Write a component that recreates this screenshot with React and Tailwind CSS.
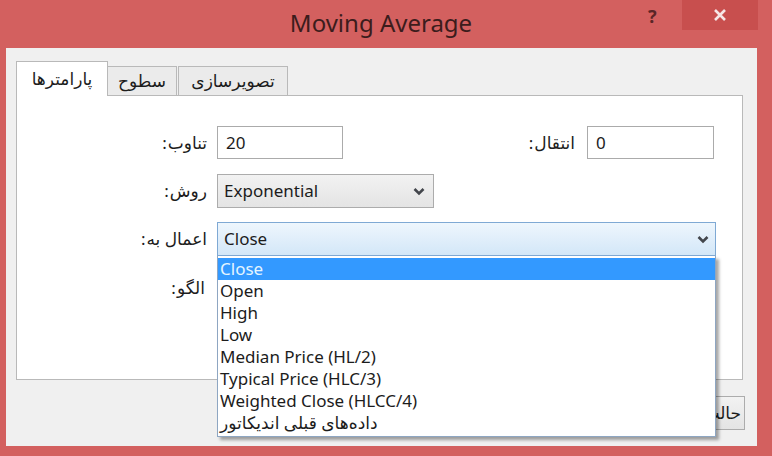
import React from "react";

const OPTIONS = [
  "Close",
  "Open",
  "High",
  "Low",
  "Median Price (HL/2)",
  "Typical Price (HLC/3)",
  "Weighted Close (HLCC/4)",
  "داده‌های قبلی اندیکاتور",
];

function Chevron() {
  return (
    <svg width="12" height="9" viewBox="0 0 12 9" className="shrink-0">
      <path d="M1.5 2 L6 6.5 L10.5 2" fill="none" stroke="#43464c" strokeWidth="2.6" />
    </svg>
  );
}

// colon sits on the left of the persian word, as in the dialog
function Label({ text, className = "" }) {
  return (
    <div className={`flex justify-end items-center text-[17px] text-[#1c1c1c] ${className}`}>
      <span className="mr-[1px]">:</span>
      <span>{text}</span>
    </div>
  );
}

export default function App() {
  return (
    <div className="w-[772px] h-[456px] bg-[#d3605f] flex flex-col overflow-hidden font-['Noto_Sans','DejaVu_Sans',sans-serif]">
      {/* Caption */}
      <div className="h-[48px] flex items-start shrink-0">
        <div className="flex-1 pl-[114px] pt-[5px] text-center text-[24px] text-[#3b1c1c]">
          Moving Average
        </div>
        <div className="w-[14px] pt-[3px] mr-[20px] text-[18px] font-bold text-[#5b2526]">?</div>
        <div className="w-[76px] h-[30px] mr-[14px] bg-[#c84f4e] flex items-center justify-center">
          <svg width="14" height="14" viewBox="0 0 14 14">
            <path d="M2 2 L12 12 M12 2 L2 12" stroke="#f6e6e6" strokeWidth="2.6" />
          </svg>
        </div>
      </div>

      {/* Client area */}
      <div className="ml-[6px] w-[751px] h-[398px] bg-[#f0f0f0] pt-[13px] pl-[10px] pr-[14px] flex flex-col">
        {/* Tabs */}
        <div className="h-[34px] flex items-end">
          <div className="w-[92px] h-[35px] -mb-px z-10 bg-white border border-b-0 border-[#b9b9b9] flex items-start justify-center pt-[4px]">
            <span className="text-[17px] text-[#1c1c1c]">پارامترها</span>
          </div>
          <div className="w-[69px] h-[29px] bg-[#ebebeb] border border-b-0 border-l-0 border-[#b9b9b9] flex items-center justify-center">
            <span className="text-[17px] text-[#1c1c1c]">سطوح</span>
          </div>
          <div className="w-[110px] h-[29px] ml-px bg-[#ebebeb] border border-b-0 border-[#b9b9b9] flex items-center justify-center">
            <span className="text-[17px] text-[#1c1c1c]">تصویرسازی</span>
          </div>
        </div>

        {/* Panel */}
        <div className="w-[727px] h-[285px] bg-white border border-[#b9b9b9] pt-[30px] flex flex-col gap-[15px]">
          <div className="flex items-center h-[33px]">
            <Label text="تناوب" className="w-[190px]" />
            <div className="ml-[10px] w-[126px] h-[33px] border border-[#ababab] bg-white flex items-center pl-[8px] text-[17px] text-[#1c1c1c]">
              20
            </div>
            <Label text="انتقال" className="w-[232px]" />
            <div className="ml-[12px] w-[127px] h-[33px] border border-[#ababab] bg-white flex items-center pl-[8px] text-[17px] text-[#1c1c1c]">
              0
            </div>
          </div>

          <div className="flex items-center h-[34px]">
            <Label text="روش" className="w-[190px]" />
            <div className="ml-[10px] w-[217px] h-[34px] border border-[#acacac] bg-gradient-to-b from-[#f2f2f2] to-[#e4e4e4] flex items-center justify-between pl-[6px] pr-[8px] text-[17px] text-[#1c1c1c]">
              <span>Exponential</span>
              <Chevron />
            </div>
          </div>

          <div className="flex items-center h-[34px] -mt-px">
            <Label text="اعمال به" className="w-[190px]" />
            <div className="relative ml-[10px] w-[499px] h-[34px] z-20">
              <div className="w-full h-full border border-[#7fa9d4] bg-gradient-to-b from-[#eef6fd] to-[#d3e7f8] flex items-center justify-between pl-[6px] pr-[6px] text-[17px] text-[#1c1c1c]">
                <span>Close</span>
                <Chevron />
              </div>
              <div className="absolute top-full left-0 w-full h-[181px] bg-white border border-t-0 border-[#8ea6c2] shadow-[3px_3px_3px_rgba(0,0,0,0.35)] pt-[2px]">
                {OPTIONS.map((o, i) => (
                  <div
                    key={o}
                    className={`h-[22px] leading-[22px] pl-[2px] text-[17px] whitespace-nowrap ${
                      i === 0 ? "bg-[#3399ff] text-[#e4f5ff]" : "text-[#1c1c1c]"
                    }`}
                  >
                    {o}
                  </div>
                ))}
              </div>
            </div>
          </div>

          <div className="flex items-center h-[34px]">
            <Label text="الگو" className="w-[188px]" />
            <div className="ml-[12px] w-[217px] h-[34px] border border-[#acacac] bg-[#eeeeee]" />
          </div>
        </div>

        {/* Footer buttons */}
        <div className="mt-[16px] flex justify-end -mr-[2px]">
          <div className="w-[120px] h-[34px] border border-[#acacac] bg-gradient-to-b from-[#f2f2f2] to-[#e4e4e4] flex items-center justify-end pr-[3px] overflow-hidden">
            <span className="text-[17px] text-[#1c1c1c] whitespace-nowrap">حالت پیش‌فرض</span>
          </div>
        </div>
      </div>
    </div>
  );
}
